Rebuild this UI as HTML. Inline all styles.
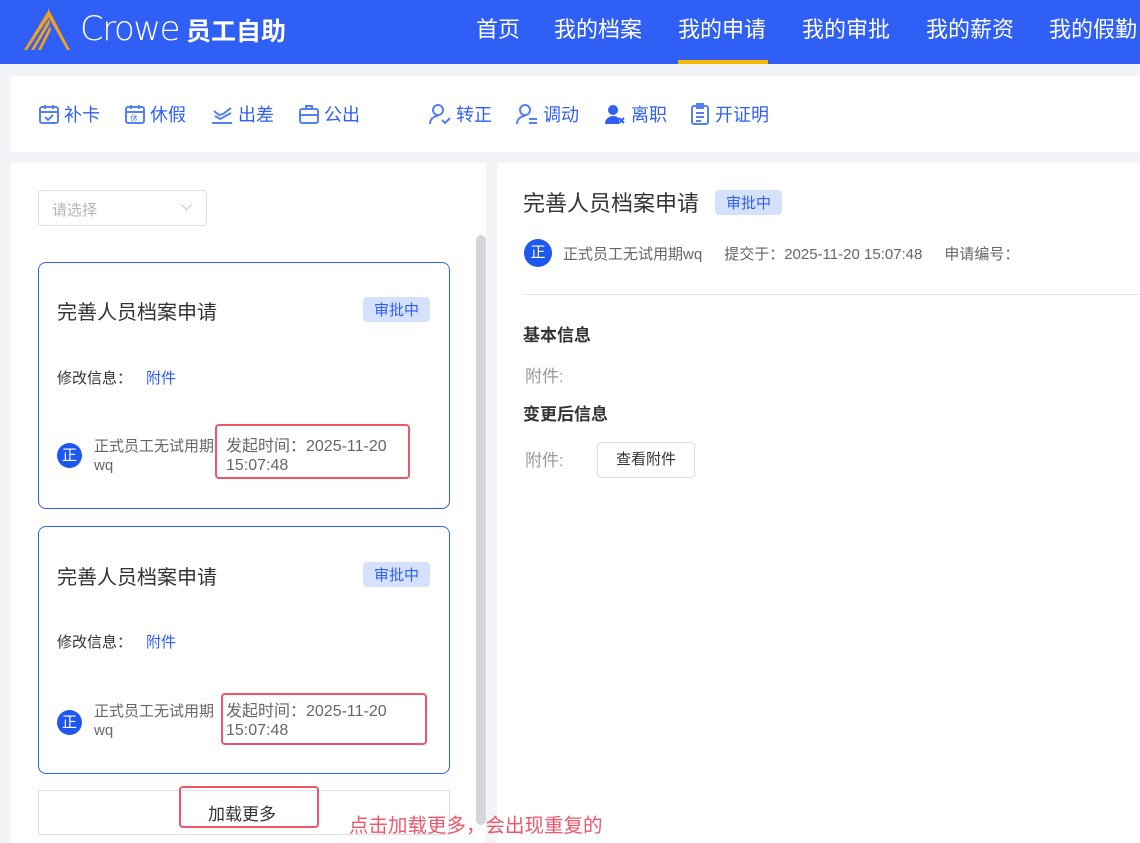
<!DOCTYPE html>
<html><head><meta charset="utf-8"><style>
*{margin:0;padding:0;box-sizing:border-box}
body{width:1140px;height:843px;overflow:hidden;background:#f3f4f8;font-family:"Liberation Sans","Noto Sans CJK SC",sans-serif;position:relative;color:#333}
.a{position:absolute}
.hdr{left:0;top:0;width:1140px;height:64px;background:#305ff6}
.nav{top:12px;font-size:22px;color:#fff;white-space:nowrap}
.tb{left:11px;top:76px;width:1129px;height:76px;background:#fff}
.ti{top:101px;font-size:18px;color:#2f5ff5;display:flex;align-items:center;gap:4px}
.lp{left:11px;top:163px;width:475px;height:680px;background:#fff}
.rp{left:497px;top:163px;width:643px;height:680px;background:#fff}
.card{left:38px;width:412px;border:1px solid #2f5ff5;border-radius:8px;background:#fff}
.tag{background:#d6e2fd;color:#2f5ff5;font-size:15px;border-radius:4px;padding:2px 11px}
.av{width:25px;height:25px;border-radius:50%;background:#1e56f0;color:#fff;font-size:15px;text-align:center;line-height:25px}
.red{border:2px solid #f0566a;border-radius:4px}
</style></head><body>
<div class="a hdr"></div>
<svg class="a" style="left:22px;top:7px" width="50" height="44" viewBox="0 0 50 44"><path d="M26 1 L48 43 L45 43 L26 9 Z" fill="#f0a21c"/><path d="M26 4 L2 43 L5 43 L27 10Z" fill="#f0a21c"/><path d="M27 12 L9 43 L12 43 L28 16Z" fill="#f0a21c"/><path d="M28 19 L16 43 L19 43 L29 23Z" fill="#f0a21c"/></svg>
<div class="a" style="left:80px;top:9px;font-size:34px;color:#fff;letter-spacing:-1.5px;font-family:'DejaVu Sans',sans-serif;font-weight:200">Crowe</div>
<div class="a" style="left:186px;top:12px;font-size:25px;color:#fff;font-weight:bold">员工自助</div>
<div class="a nav" style="left:476px">首页</div>
<div class="a nav" style="left:554px">我的档案</div>
<div class="a nav" style="left:678px">我的申请</div>
<div class="a" style="left:678px;top:60px;width:90px;height:4px;background:#f5b800"></div>
<div class="a nav" style="left:802px">我的审批</div>
<div class="a nav" style="left:926px">我的薪资</div>
<div class="a nav" style="left:1049px">我的假勤</div>
<div class="a tb"></div>
<div class="a ti" style="left:38px"><svg width="22" height="22" viewBox="0 0 22 22" fill="none" stroke="#5580f0" stroke-width="2"><rect x="2" y="4" width="18" height="16" rx="2"/><path d="M2 9h18M7 2v4M15 2v4M7 14l3 3 5-5"/></svg>补卡</div>
<div class="a ti" style="left:124px"><svg width="22" height="22" viewBox="0 0 22 22" fill="none" stroke="#5580f0" stroke-width="2"><rect x="2" y="4" width="18" height="16" rx="2"/><path d="M2 9h18M7 2v4M15 2v4"/><text x="6" y="18" font-size="8" fill="#5580f0" stroke="none">休</text></svg>休假</div>
<div class="a ti" style="left:210px"><svg width="24" height="22" viewBox="0 0 24 22" fill="none" stroke="#5580f0" stroke-width="2"><path d="M4 8l5 4 4-1 8-6M5 13l5 3 11-6M2 20h20"/></svg>出差</div>
<div class="a ti" style="left:298px"><svg width="22" height="22" viewBox="0 0 22 22" fill="none" stroke="#5580f0" stroke-width="2"><rect x="2" y="6" width="18" height="14" rx="2"/><path d="M8 6V3h6v3M2 12h18"/></svg>公出</div>
<div class="a ti" style="left:428px"><svg width="24" height="22" viewBox="0 0 24 22" fill="none" stroke="#5580f0" stroke-width="2"><circle cx="10" cy="7" r="5"/><path d="M2 21c0-5 4-8 8-8M14 17l3 3 5-5"/></svg>转正</div>
<div class="a ti" style="left:515px"><svg width="24" height="22" viewBox="0 0 24 22" fill="none" stroke="#5580f0" stroke-width="2"><circle cx="10" cy="7" r="5"/><path d="M2 21c0-5 4-8 8-8M14 16h8M14 20h8"/></svg>调动</div>
<div class="a ti" style="left:603px"><svg width="24" height="22" viewBox="0 0 24 22"><circle cx="10" cy="7" r="5" fill="#2f5ff5"/><path d="M2 21c0-5 4-8 8-8s6 2 6 3v5z" fill="#2f5ff5"/><path d="M16 15l5 5M21 15l-5 5" stroke="#2f5ff5" stroke-width="2"/></svg>离职</div>
<div class="a ti" style="left:689px"><svg width="22" height="22" viewBox="0 0 22 22" fill="none" stroke="#5580f0" stroke-width="2"><rect x="3" y="3" width="16" height="18" rx="2"/><path d="M8 1h6v4H8zM7 10h8M7 14h8M7 18h5"/></svg>开证明</div>
<div class="a lp"></div>
<div class="a rp"></div>
<div class="a" style="left:38px;top:190px;width:169px;height:36px;border:1px solid #dcdfe6;border-radius:4px;font-size:15px;color:#b0b3b8;padding:8px 13px">请选择<span style="position:absolute;right:14px;top:6px;color:#aaa">⌵</span></div>
<div class="a" style="left:476px;top:235px;width:10px;height:590px;background:#d5d6d9;border-radius:5px"></div>

<div class="a card" style="top:262px;height:247px">
<div class="a" style="left:18px;top:33px;font-size:20px;color:#333">完善人员档案申请</div>
<div class="a tag" style="left:324px;top:34px">审批中</div>
<div class="a" style="left:18px;top:104px;font-size:15px">修改信息：<span style="color:#2f5ff5;margin-left:14px">附件</span></div>
<div class="a av" style="left:18px;top:180px">正</div>
<div class="a" style="left:55px;top:174px;font-size:15px;color:#666;line-height:19px;width:130px">正式员工无试用期<br>wq</div>
<div class="a" style="left:187px;top:174px;font-size:16px;color:#666;line-height:19px">发起时间：2025-11-20<br>15:07:48</div>
<div class="a red" style="left:176px;top:161px;width:195px;height:55px"></div>
</div>
<div class="a card" style="top:526px;height:248px">
<div class="a" style="left:18px;top:34px;font-size:20px;color:#333">完善人员档案申请</div>
<div class="a tag" style="left:324px;top:35px">审批中</div>
<div class="a" style="left:18px;top:104px;font-size:15px">修改信息：<span style="color:#2f5ff5;margin-left:14px">附件</span></div>
<div class="a av" style="left:18px;top:183px">正</div>
<div class="a" style="left:55px;top:175px;font-size:15px;color:#666;line-height:19px;width:130px">正式员工无试用期<br>wq</div>
<div class="a" style="left:187px;top:175px;font-size:16px;color:#666;line-height:19px">发起时间：2025-11-20<br>15:07:48</div>
<div class="a red" style="left:182px;top:166px;width:206px;height:52px"></div>
</div>
<div class="a" style="left:38px;top:790px;width:412px;height:45px;border:1px solid #dcdfe6;background:#fff"></div>
<div class="a" style="left:208px;top:800px;font-size:17px">加载更多</div>
<div class="a red" style="left:179px;top:786px;width:140px;height:42px"></div>
<div class="a" style="left:349px;top:809px;font-size:19.5px;color:#f0566a">点击加载更多，会出现重复的</div>

<div class="a" style="left:523px;top:186px;font-size:22px;color:#333">完善人员档案申请</div>
<div class="a tag" style="left:715px;top:190px">审批中</div>
<div class="a av" style="left:524px;top:239px;width:28px;height:28px;line-height:28px">正</div>
<div class="a" style="left:563px;top:243px;font-size:15px;color:#666;white-space:nowrap">正式员工无试用期wq<span style="margin-left:22px">提交于：2025-11-20 15:07:48</span><span style="margin-left:22px">申请编号：</span></div>
<div class="a" style="left:523px;top:294px;width:617px;height:1px;background:#e4e6ea"></div>
<div class="a" style="left:523px;top:321px;font-size:17px;font-weight:bold">基本信息</div>
<div class="a" style="left:525px;top:362px;font-size:17px;color:#999">附件:</div>
<div class="a" style="left:523px;top:400px;font-size:17px;font-weight:bold">变更后信息</div>
<div class="a" style="left:525px;top:446px;font-size:17px;color:#999">附件:</div>
<div class="a" style="left:597px;top:442px;width:98px;height:36px;border:1px solid #dcdfe6;border-radius:4px;font-size:15px;text-align:center;line-height:34px;color:#333">查看附件</div>
</body></html>
